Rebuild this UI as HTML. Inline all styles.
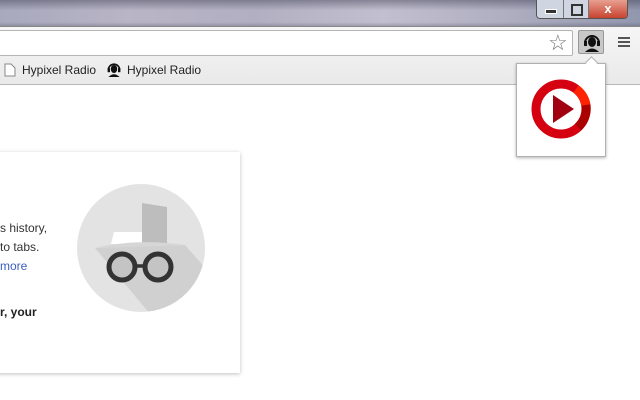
<html><head><style>
body{margin:0;width:640px;height:400px;overflow:hidden;background:#fff;font-family:"Liberation Sans",sans-serif;position:relative}
.a{position:absolute}
</style></head><body>
<div class="a" style="left:0;top:0;width:640px;height:26px;background:linear-gradient(90deg,#a7a9bd,#b9b4c6 20%,#b2afc2 40%,#c2bfcf 60%,#aeadc0 80%,#9197ae);"></div>
<div class="a" style="left:0;top:0;width:640px;height:26px;background:linear-gradient(rgba(60,60,80,.45),rgba(60,60,80,0) 40%,rgba(0,0,0,0) 85%,rgba(60,60,80,.25))"></div>
<div class="a" style="left:536px;top:0;width:90px;height:18px;border:1px solid #555;border-top:0;border-radius:0 0 4px 4px;background:#cfd6e2;overflow:hidden">
<div class="a" style="left:0;top:0;width:26px;height:18px;border-right:1px solid #777"><div class="a" style="left:8px;top:9px;width:10px;height:3px;background:#333;border:1px solid #fff"></div></div>
<div class="a" style="left:27px;top:0;width:24px;height:18px;border-right:1px solid #777"><div class="a" style="left:7px;top:4px;width:8px;height:8px;border:2px solid #333"></div></div>
<div class="a" style="left:52px;top:0;width:38px;height:18px;background:linear-gradient(#e8a090,#c7432f);color:#fff;font-weight:bold;font-size:13px;text-align:center;line-height:17px">x</div>
</div>
<div class="a" style="left:0;top:26px;width:640px;height:58px;background:linear-gradient(#f6f6f6,#e9e9e9);border-top:1px solid #888"></div>
<div class="a" style="left:0;top:84px;width:640px;height:1px;background:#b8b8b8"></div>
<div class="a" style="left:-2px;top:30px;width:573px;height:24px;background:#fff;border:1px solid #b5b5b5;border-radius:2px"></div>
<div class="a" style="left:548px;top:30px;font-size:22px;color:#777">☆</div>
<div class="a" style="left:578px;top:30px;width:26px;height:24px;background:#c8c8c8;border:1px solid #999;border-radius:2px;box-sizing:border-box"></div>
<svg class="a" style="left:582px;top:32px" width="20" height="20" viewBox="0 0 20 20"><path d="M3 11a7 7 0 0 1 14 0" stroke="#111" stroke-width="2" fill="none"/><ellipse cx="10" cy="10" rx="4" ry="5" fill="#111"/><rect x="2" y="9" width="3" height="5" fill="#111"/><rect x="15" y="9" width="3" height="5" fill="#111"/><path d="M3 20q7-7 14 0z" fill="#111"/></svg>
<div class="a" style="left:618px;top:37px;width:12px;height:2px;background:#555;box-shadow:0 4px #555,0 8px #555"></div>
<svg class="a" style="left:4px;top:63px" width="12" height="14"><path d="M1 1h6l4 4v8H1z" fill="#fff" stroke="#888"/></svg>
<div class="a" style="left:22px;top:63px;font-size:12px;color:#222">Hypixel Radio</div>
<svg class="a" style="left:106px;top:61px" width="16" height="16" viewBox="0 0 20 20"><path d="M3 11a7 7 0 0 1 14 0" stroke="#111" stroke-width="2" fill="none"/><ellipse cx="10" cy="10" rx="4" ry="5" fill="#111"/><rect x="2" y="9" width="3" height="5" fill="#111"/><rect x="15" y="9" width="3" height="5" fill="#111"/><path d="M3 20q7-7 14 0z" fill="#111"/></svg>
<div class="a" style="left:127px;top:63px;font-size:12px;color:#222">Hypixel Radio</div>
<div class="a" style="left:516px;top:63px;width:90px;height:94px;background:#fff;border:1px solid #b0b0b0;box-sizing:border-box;box-shadow:0 1px 3px rgba(0,0,0,.3)"></div>
<div class="a" style="left:587px;top:58px;width:8px;height:8px;background:#fff;border-left:1px solid #b0b0b0;border-top:1px solid #b0b0b0;transform:rotate(45deg)"></div>
<svg class="a" style="left:530px;top:78px" width="62" height="62" viewBox="0 0 62 62"><circle cx="31" cy="31" r="25" fill="none" stroke="#d50010" stroke-width="9"/><path d="M46 11A25 25 0 0 1 56 27" stroke="#f20" stroke-width="9" fill="none"/><path d="M56 27A25 25 0 0 1 48 49" stroke="#a00" stroke-width="9" fill="none"/><path d="M23 17L44 31L23 45z" fill="#a00010"/></svg>
<div class="a" style="left:-10px;top:152px;width:250px;height:221px;background:#fff;box-shadow:0 1px 4px rgba(0,0,0,.25)"></div>
<div class="a" style="left:0;top:219px;font-size:12px;color:#333;line-height:19px">s history,<br>to tabs.<br><span style="color:#3b5fc0">more</span></div>
<div class="a" style="left:0;top:305px;font-size:12px;font-weight:bold;color:#222">r, your</div>
<svg class="a" style="left:77px;top:184px" width="128" height="128" viewBox="0 0 128 128"><defs><clipPath id="c"><circle cx="64" cy="64" r="64"/></clipPath></defs><circle cx="64" cy="64" r="64" fill="#e3e3e3"/><g clip-path="url(#c)"><path d="M18 64L108 61L130 86L103 130L73 130z" fill="#d0d0d0"/><path d="M65 19L90 23V61H65z" fill="#bdbdbd"/><path d="M37 48H65V60H34z" fill="#fff"/><path d="M18 64Q60 54 108 61z" fill="#d6d6d6"/></g><circle cx="45" cy="83" r="13" fill="#c4c4c4" stroke="#333" stroke-width="5"/><circle cx="81" cy="83" r="13" fill="#c4c4c4" stroke="#333" stroke-width="5"/><path d="M57 82h12" stroke="#333" stroke-width="3.5"/></svg>
</body></html>
